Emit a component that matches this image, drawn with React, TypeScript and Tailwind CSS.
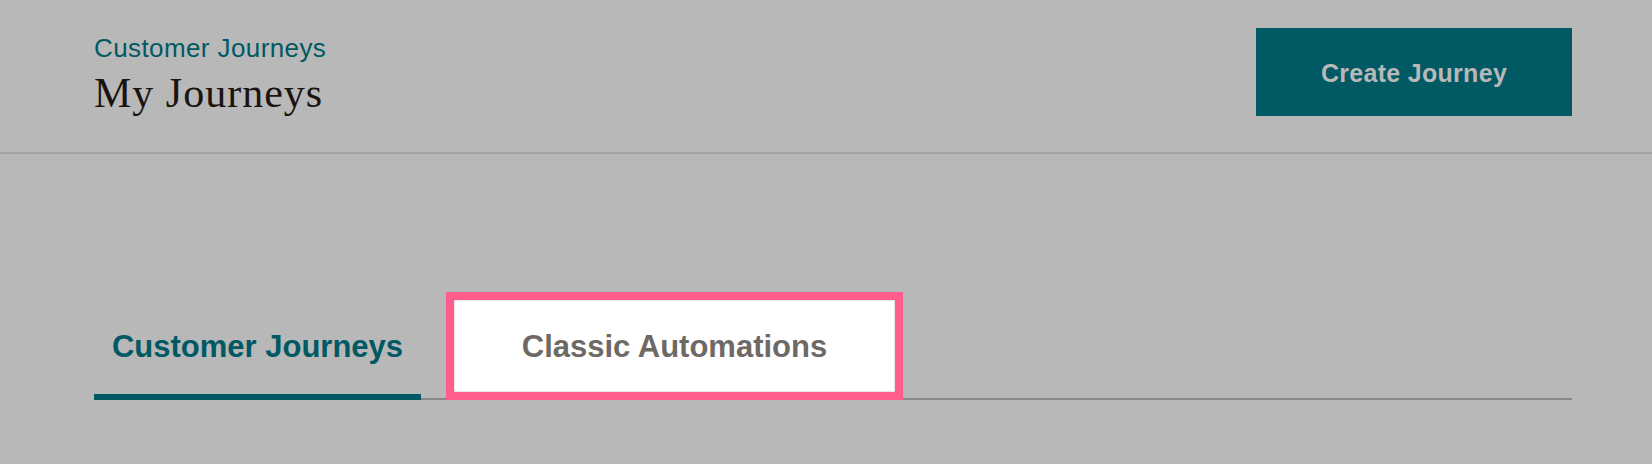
export default function App() {
  return (
    <div className="min-h-[464px] w-full bg-[#b8b8b8] font-['Liberation_Sans',Arial,sans-serif]">
      <header className="flex h-[154px] items-start justify-between border-b-2 border-[#a3a3a3] pl-[94px] pr-[80px]">
        <div className="pt-[33px]">
          <p className="text-[26px] leading-[30px] tracking-[0.4px] text-[#005963]">Customer Journeys</p>
          <h1 className="mt-[6px] font-['Liberation_Serif',serif] text-[42px] leading-[48px] tracking-[1px] text-[#1a140f]">
            My Journeys
          </h1>
        </div>
        <button className="mt-[28px] h-[88px] w-[316px] bg-[#005963] pt-[4px] text-[25px] font-semibold tracking-[0.3px] text-[#b8b8b8]">
          Create Journey
        </button>
      </header>

      <main className="pl-[94px] pr-[80px]">
        <nav className="mt-[138px] flex items-end border-b-2 border-[#878783]">
          <button className="-mb-[2px] w-[327px] border-b-[6px] border-[#005963] pb-[29px] text-[31px] font-bold leading-[36px] text-[#005963]">
            Customer Journeys
          </button>
          <div className="-mb-[2px] ml-[25px] border-[8px] border-[#ff5e8d]">
            <button className="flex h-[92px] w-[441px] items-center justify-center bg-white pt-[2px] text-[31px] font-bold leading-[36px] text-[#6e6964] shadow-[inset_0_0_2px_rgba(0,0,0,0.35)]">
              Classic Automations
            </button>
          </div>
        </nav>
      </main>
    </div>
  )
}
